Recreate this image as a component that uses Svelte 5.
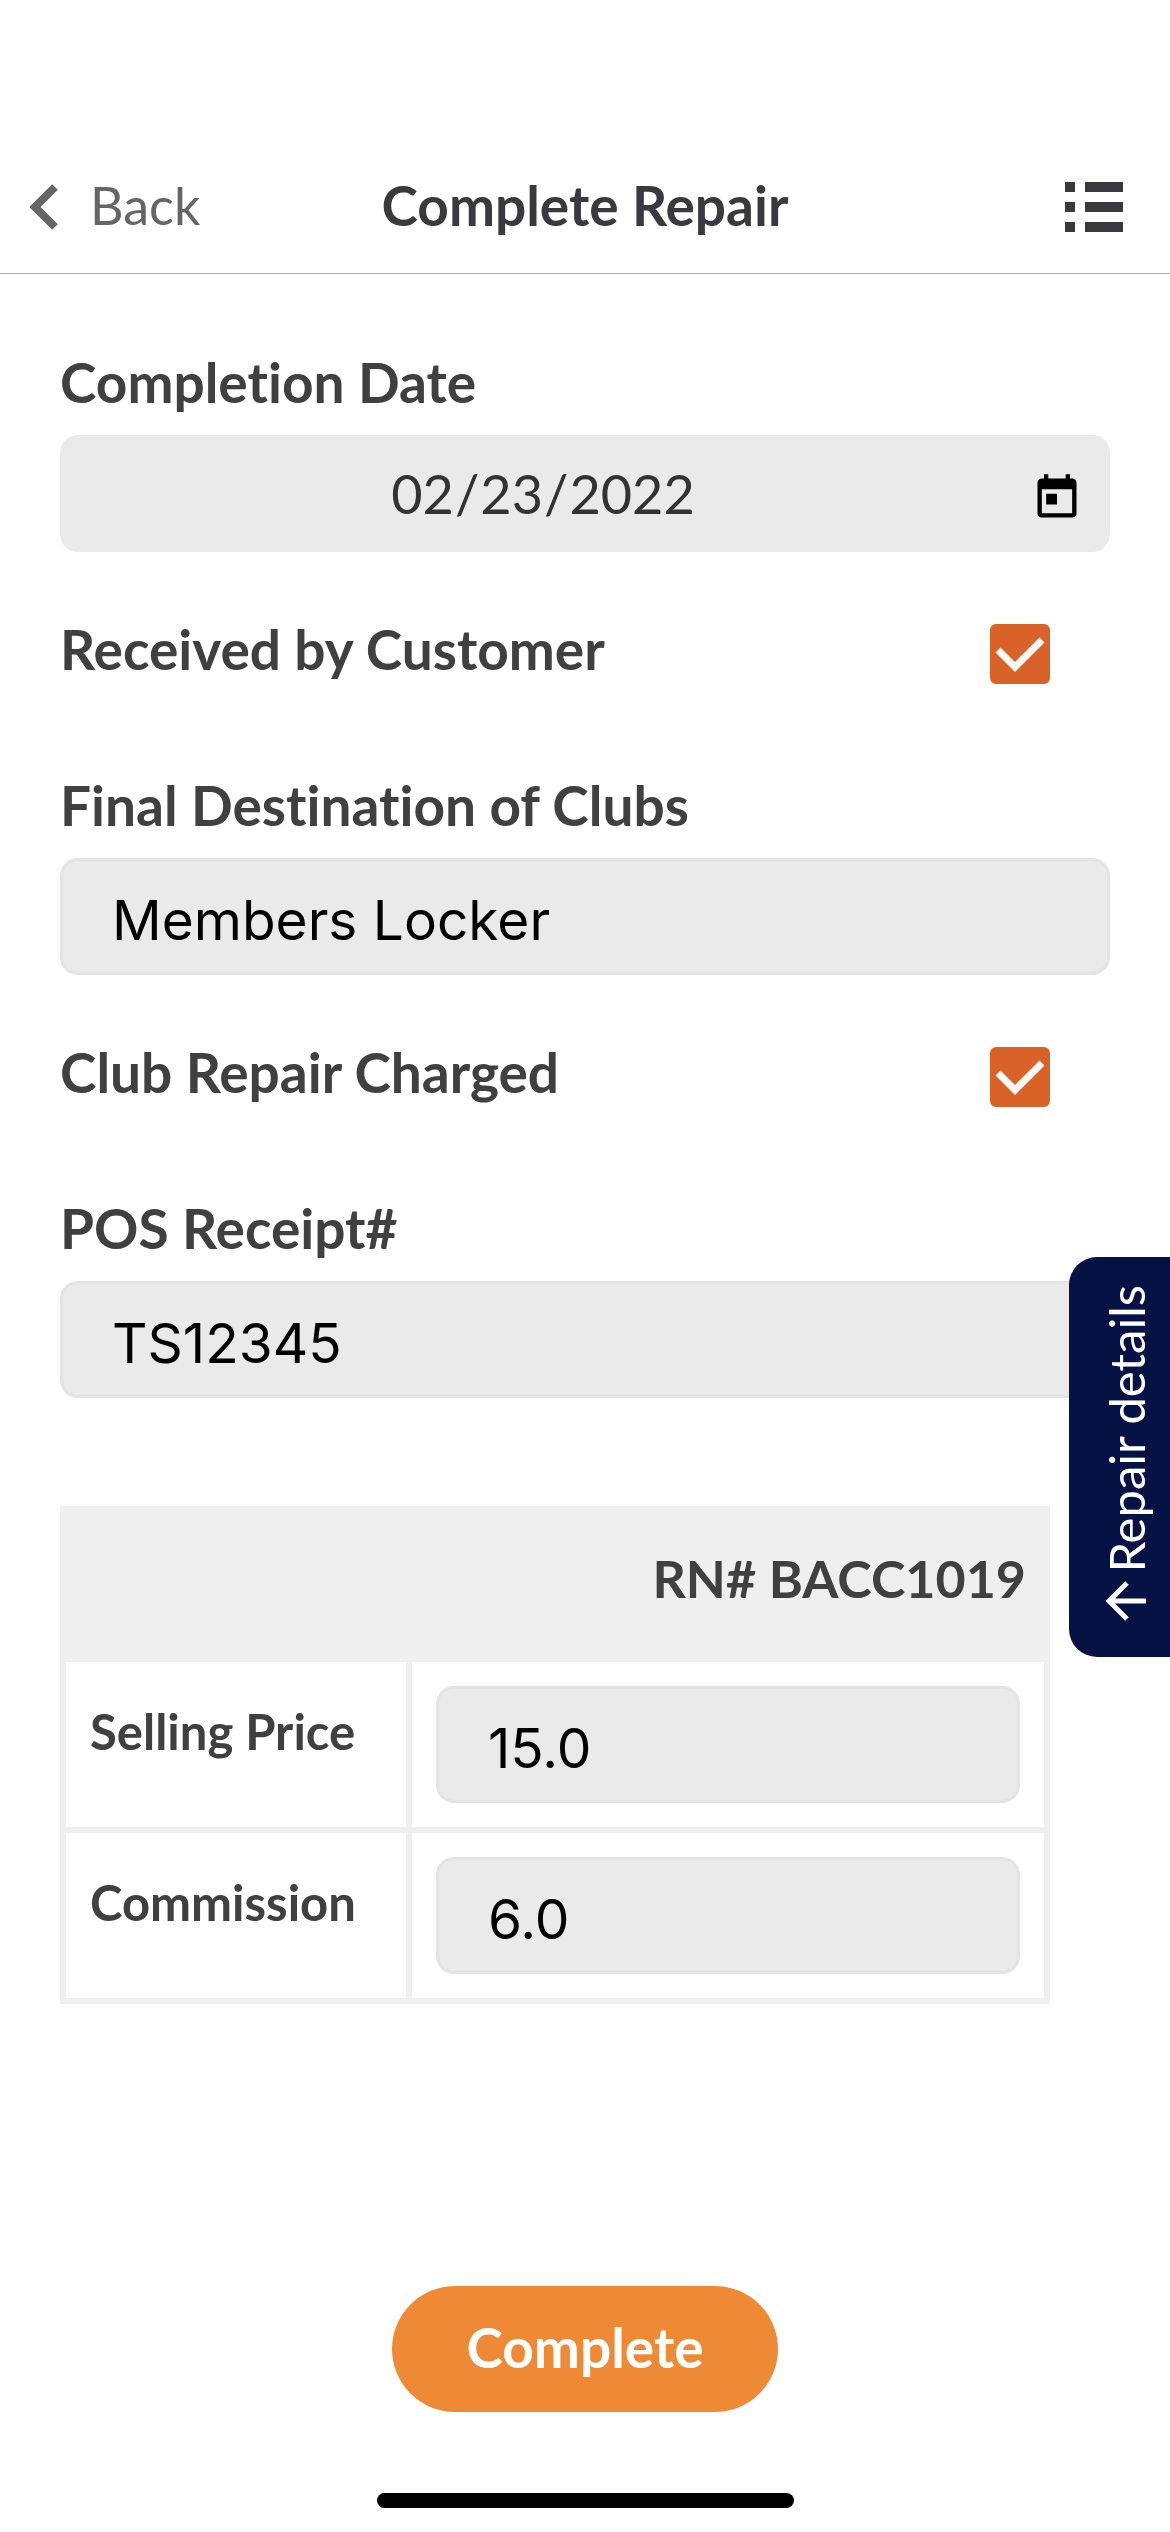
<script>
  let completionDate = "2022-02-23";
  let receivedByCustomer = true;
  let destination = "Members Locker";
  let repairCharged = true;
  let posReceipt = "TS12345";

  let repairNumber = "BACC1019";
  let amounts = [
    { id: "selling-price", label: "Selling Price", value: "15.0" },
    { id: "commission", label: "Commission", value: "6.0" }
  ];

  let showDetails = false;
  let completed = false;

  function complete() {
    completed = true;
  }
</script>

<div class="page">
  <header class="topbar">
    <button class="back" type="button">
      <svg width="28" height="46" viewBox="0 0 28 46" aria-hidden="true">
        <path d="M25 3 5 23l20 20" fill="none" stroke="currentColor" stroke-width="8" />
      </svg>
      <span>Back</span>
    </button>
    <h1>Complete Repair</h1>
    <button class="menu" type="button" aria-label="Menu">
      <svg width="58" height="50" viewBox="0 0 58 50" aria-hidden="true">
        <path d="M0 0h10v10H0zM20 0h38v10H20zM0 20h10v10H0zM20 20h38v10H20zM0 40h10v10H0zM20 40h38v10H20z" fill="currentColor" />
      </svg>
    </button>
  </header>

  <form on:submit|preventDefault={complete}>
    <div class="field">
      <label for="completion-date">Completion Date</label>
      <div class="date-wrap">
        <input id="completion-date" class="date" type="date" bind:value={completionDate} />
        <svg class="calendar" width="52" height="52" viewBox="0 0 24 24" aria-hidden="true">
          <path d="M19 3h-1V1h-2v2H8V1H6v2H5c-1.1 0-2 .9-2 2v14c0 1.1.9 2 2 2h14c1.1 0 2-.9 2-2V5c0-1.1-.9-2-2-2zm0 16H5V8h14v11zM7 10h5v5H7z" />
        </svg>
      </div>
    </div>

    <div class="check-row">
      <label for="received">Received by Customer</label>
      <span class="check">
        <input id="received" type="checkbox" bind:checked={receivedByCustomer} />
        {#if receivedByCustomer}
          <svg viewBox="0 0 60 60" aria-hidden="true"><path d="M8 26l17 17 27-27" /></svg>
        {/if}
      </span>
    </div>

    <div class="field">
      <label for="destination">Final Destination of Clubs</label>
      <input id="destination" class="text" type="text" bind:value={destination} />
    </div>

    <div class="check-row">
      <label for="charged">Club Repair Charged</label>
      <span class="check">
        <input id="charged" type="checkbox" bind:checked={repairCharged} />
        {#if repairCharged}
          <svg viewBox="0 0 60 60" aria-hidden="true"><path d="M8 26l17 17 27-27" /></svg>
        {/if}
      </span>
    </div>

    <div class="field">
      <label for="pos-receipt">POS Receipt#</label>
      <input id="pos-receipt" class="text" type="text" bind:value={posReceipt} />
    </div>

    <table>
      <thead>
        <tr>
          <th colspan="2">RN# {repairNumber}</th>
        </tr>
      </thead>
      <tbody>
        {#each amounts as row}
          <tr>
            <td class="name"><label for={row.id}>{row.label}</label></td>
            <td class="amount">
              <input id={row.id} class="text" type="text" inputmode="decimal" bind:value={row.value} />
            </td>
          </tr>
        {/each}
      </tbody>
    </table>

    <div class="actions">
      <button class="complete" type="submit" disabled={completed}>Complete</button>
    </div>
  </form>

  <div class="home-bar"></div>

  <button class="details-tab" type="button" aria-expanded={showDetails} on:click={() => (showDetails = !showDetails)}>
    <span>Repair details</span>
    <svg width="40" height="40" viewBox="0 0 40 40" aria-hidden="true">
      <path d="M21 2 3 20l18 18M3 20h37" fill="none" stroke="currentColor" stroke-width="5" />
    </svg>
  </button>
</div>

<style>
  :global(body) {
    background: #fff;
  }
  .page {
    min-height: 100vh;
    box-sizing: border-box;
    padding-bottom: 24px;
    display: flex;
    flex-direction: column;
    font-family: Lato, "Open Sans", sans-serif;
    font-variant-ligatures: none;
    color: #404040;
  }
  button {
    border: none;
    background: none;
    padding: 0;
    font-family: inherit;
    cursor: pointer;
  }
  svg {
    display: block;
  }

  .topbar {
    display: grid;
    grid-template-columns: 1fr auto 1fr;
    align-items: center;
    padding: 140px 30px 0;
    height: 133px;
    border-bottom: 1px solid #b2b2b2;
  }
  .back {
    display: flex;
    align-items: center;
    gap: 32px;
    justify-self: start;
    font-size: 52px;
    line-height: 60px;
    color: #666;
  }
  .back span,
  h1 {
    padding-bottom: 4px;
  }
  h1 {
    margin: 0;
    font-size: 55px;
    line-height: 60px;
    font-weight: 700;
    color: #3a3a3e;
  }
  .menu {
    justify-self: end;
    padding-right: 17px;
    color: #3a3a3e;
  }

  form {
    flex: 1;
    display: flex;
    flex-direction: column;
    padding: 83px 60px 0;
  }
  label {
    display: block;
    font-size: 55px;
    line-height: 50px;
    font-weight: 700;
  }
  .field label {
    margin-bottom: 28px;
  }

  .text,
  .date {
    display: block;
    width: 100%;
    height: 117px;
    box-sizing: border-box;
    margin: 0;
    border: 3px solid #e4e4e4;
    border-radius: 18px;
    background: #eaeaea;
    outline: none;
  }
  .text {
    padding: 6px 49px 0;
    font-family: Inter, sans-serif;
    font-size: 55px;
    color: #000;
  }

  .date-wrap {
    position: relative;
  }
  .date {
    border-color: #eaeaea;
    padding: 0 31px 0 0;
    font-family: inherit;
    font-size: 54px;
    color: #333;
  }
  .date::-webkit-datetime-edit {
    display: flex;
    justify-content: center;
  }
  .date::-webkit-datetime-edit-fields-wrapper {
    padding: 0;
  }
  .date::-webkit-calendar-picker-indicator {
    width: 39px;
    height: 43px;
    margin: 0 0 0 14px;
    padding: 0;
    opacity: 0;
  }
  .calendar {
    position: absolute;
    right: 27px;
    top: 37px;
    pointer-events: none;
  }

  .check-row {
    display: flex;
    justify-content: space-between;
    align-items: flex-start;
    margin: 72px 60px 96px 0;
  }
  .check {
    position: relative;
    width: 60px;
    height: 60px;
  }
  .check input {
    appearance: none;
    display: block;
    width: 60px;
    height: 60px;
    margin: 0;
    border: 3px solid #d86228;
    border-radius: 6px;
  }
  .check input:checked {
    background: #d86228;
  }
  .check svg {
    position: absolute;
    inset: 0;
    pointer-events: none;
  }
  .check path {
    fill: none;
    stroke: #fafafa;
    stroke-width: 7;
  }

  table {
    margin: 108px 60px 0 0;
    border-collapse: separate;
    border-spacing: 6px;
    background: #efefef;
  }
  th {
    height: 144px;
    box-sizing: border-box;
    padding: 0 18px 12px;
    text-align: right;
    font-size: 52px;
    line-height: 60px;
  }
  td {
    padding: 24px;
    background: #fff;
  }
  .name {
    width: 340px;
    box-sizing: border-box;
    vertical-align: top;
  }
  .name label {
    font-size: 49px;
    line-height: 50px;
    padding-top: 20px;
    white-space: nowrap;
  }

  .actions {
    display: flex;
    justify-content: center;
    margin-top: auto;
    padding: 80px 0 81px;
  }
  .complete {
    height: 126px;
    padding: 0 74px 4px;
    border-radius: 63px;
    background: #ee8a35;
    color: #fff;
    font-size: 55px;
    font-weight: 700;
  }
  .home-bar {
    align-self: center;
    width: 417px;
    height: 15px;
    border-radius: 8px;
    background: #000;
  }

  .details-tab {
    position: fixed;
    right: 0;
    top: 1257px;
    display: flex;
    flex-direction: column;
    align-items: center;
    justify-content: center;
    gap: 8px;
    width: 101px;
    height: 400px;
    padding: 0 0 8px 12px;
    border-radius: 28px 0 0 28px;
    background: #051243;
    color: #fff;
    font-size: 49px;
    line-height: 50px;
  }
  .details-tab span {
    writing-mode: vertical-rl;
    transform: rotate(180deg);
  }
</style>
